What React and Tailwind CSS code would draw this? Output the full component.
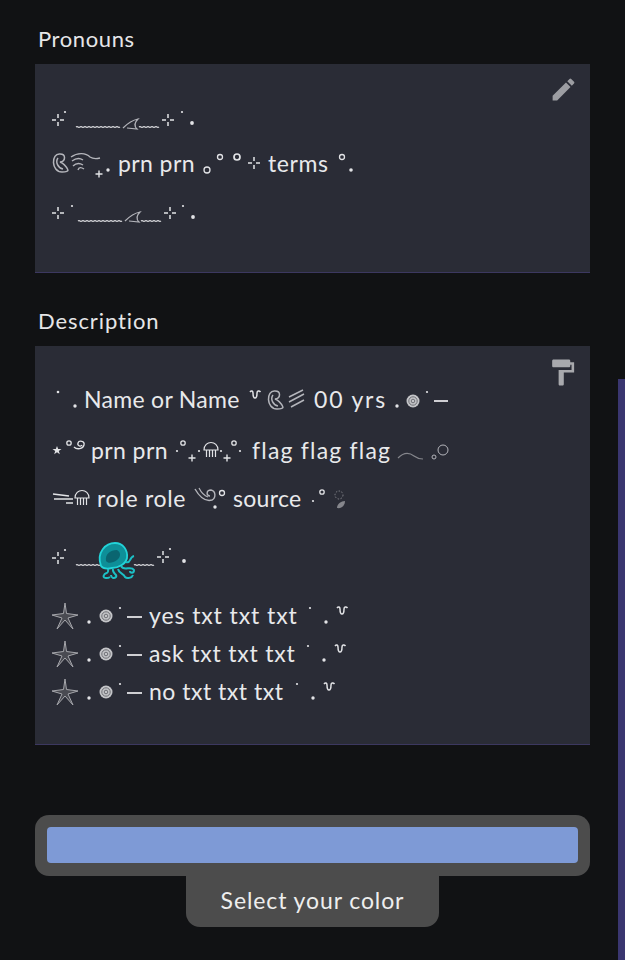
import React from 'react';

const INK = '#e2e3e6';
const SOFT = '#b4b5bb';

// ornaments are drawn in page coordinates, the viewBox shifts them into the row
const Orn = ({ x, w, cy, children }) => (
  <svg width={w} height={44} viewBox={`${x} ${cy - 22} ${w} 44`} className="shrink-0 overflow-visible" fill="none">
    {children}
  </svg>
);

const Dot = ({ x, y, r = 1.4, c = INK }) => <circle cx={x} cy={y} r={r} fill={c} />;
const Ring = ({ x, y, r = 2.5, c = INK, w = 1.3 }) => <circle cx={x} cy={y} r={r} stroke={c} strokeWidth={w} />;
const Plus = ({ x, y }) => (
  <path d={`M${x - 3.5} ${y}h7M${x} ${y - 3.5}v7`} stroke={INK} strokeWidth="1.4" />
);
const Spark = ({ x, y }) => (
  <path d={`M${x - 6} ${y}h4M${x + 2} ${y}h4M${x} ${y - 6}v4M${x} ${y + 2}v4`} stroke={INK} strokeWidth="1.5" />
);
const Wave = ({ x1, x2, y, c = INK }) => {
  let d = `M${x1} ${y}`;
  for (let x = x1; x < x2; x += 4) d += `q1 -.7 2 0t2 0`;
  return <path d={d} stroke={c} strokeWidth="1.3" />;
};
const Fin = ({ x, y }) => (
  <path d={`M${x} ${y + 4}C${x + 5} ${y - 1} ${x + 10} ${y - 4} ${x + 15} ${y - 5}C${x + 11} ${y - 1} ${x + 11} ${y + 2} ${x + 14} ${y + 5}L${x + 4} ${y + 4}`} stroke={SOFT} strokeWidth="1.2" />
);
const Shell = ({ x, y }) => (
  <g stroke={SOFT} strokeWidth="1.5">
    <path d={`M${x + 7} ${y - 9}C${x - 2} ${y - 10} ${x - 2} ${y + 9} ${x + 9} ${y + 9}C${x + 13} ${y + 9} ${x + 15} ${y + 8} ${x + 15} ${y + 7}`} />
    <path d={`M${x + 7} ${y - 9}C${x + 13} ${y - 9} ${x + 13} ${y - 2} ${x + 7} ${y - 1}C${x + 10} ${y} ${x + 13} ${y + 3} ${x + 15} ${y + 7}`} />
    <path d={`M${x + 5} ${y - 5}C${x + 2} ${y - 1} ${x + 5} ${y + 5} ${x + 10} ${y + 6}`} />
  </g>
);
const Spiral = ({ x, y }) => (
  <g>
    <circle cx={x} cy={y} r="6.5" fill="#c4c5c8" />
    <circle cx={x} cy={y} r="4.2" stroke="#6f7076" strokeWidth="1" />
    <circle cx={x} cy={y} r="1.8" stroke="#6f7076" strokeWidth="1" />
  </g>
);
const Squig = ({ x, y }) => (
  <path d={`M${x - 5} ${y - 3}c1.5 -2 3 -1 3 1c0 3 1 5 2 5s2 -2 2 -5c0 -2 2 -3 3.5 -1`} stroke={INK} strokeWidth="1.5" />
);
const StarFish = ({ x, y }) => (
  <path d={`M${x} ${y - 13}L${x + 1.5} ${y - 2.5}L${x + 13} ${y - 1}L${x + 3} ${y + 2}L${x + 8} ${y + 13}L${x} ${y + 4}L${x - 8} ${y + 13}L${x - 3} ${y + 2}L${x - 13} ${y - 1}L${x - 1.5} ${y - 2.5}Z`} fill="#4a4b52" stroke="#a5a6ab" strokeWidth="1" />
);
const Medusa = ({ x, y }) => (
  <g stroke={INK} strokeWidth="1.2">
    <path d={`M${x - 7} ${y + 1}C${x - 7} ${y - 9} ${x + 7} ${y - 9} ${x + 7} ${y + 1}Z`} />
    <path d={`M${x - 4.5} ${y + 1}v7M${x - 1.5} ${y + 1}v7M${x + 1.5} ${y + 1}v7M${x + 4.5} ${y + 1}v7`} />
  </g>
);

const Txt = ({ className, children }) => (
  <span className={`shrink-0 whitespace-nowrap pb-[1px] text-[23px] leading-[41px] text-[#e8e9eb] ${className}`}>{children}</span>
);

const Row = ({ className = '', children }) => (
  <div className={`flex items-center pl-[17px] ${className}`}>{children}</div>
);

const TopDivider = () => (
  <Orn x={52} w={150} cy={120}>
    <Spark x={58} y={120} /><Dot x={65} y={112} r={1.1} />
    <Wave x1={76} x2={120} y={127} /><Fin x={123} y={124} /><Wave x1={139} x2={159} y={127} />
    <Spark x={168} y={120} /><Dot x={182} y={112} r={1.1} /><Dot x={192} y={123} r={1.9} />
  </Orn>
);

const BottomDivider = () => (
  <Orn x={52} w={150} cy={214}>
    <Spark x={58} y={213} /><Dot x={72} y={206} r={1.1} />
    <Wave x1={78} x2={122} y={221} /><Fin x={125} y={217} /><Wave x1={141} x2={161} y={221} />
    <Spark x={170} y={213} /><Dot x={183} y={206} r={1.1} /><Dot x={193} y={217} r={1.9} />
  </Orn>
);

const Jellyfish = () => (
  <g>
    <path d="M101 566C96 552 106 543 115 543C123 543 128 550 127 558C126 564 118 568 112 568C107 569 103 569 101 566Z" fill="#0e8f98" stroke="#22d3d8" strokeWidth="1.8" />
    <path d="M106 561C105 554 110 550 117 550C121 552 121 557 117 560C113 563 108 564 106 561Z" fill="#0a6570" />
    <g stroke="#1cc0c6" strokeWidth="2">
      <path d="M126 562C131 564 129 557 134 556" />
      <path d="M121 566C124 572 131 565 134 570C134 574 130 573 130 571" />
      <path d="M118 569C119 574 124 573 125 577C127 579 132 578 133 575" />
      <path d="M113 569C112 574 118 574 116 577C114 579 111 578 111 575" />
      <path d="M108 569C109 575 105 572 104 575C102 578 107 579 110 577" />
    </g>
  </g>
);

const ListRow = ({ cy, label, labelW, tail }) => (
  <Row className="h-[38px]">
    <Orn x={52} w={97} cy={cy}>
      <StarFish x={65} y={cy} /><Dot x={89} y={cy + 6} r={1.7} /><Spiral x={106} y={cy} />
      <Dot x={120} y={cy - 8} r={1.1} /><path d={`M127 ${cy + 1}h15`} stroke={INK} strokeWidth="1.8" />
    </Orn>
    <Txt className={labelW}>{label}</Txt>
    <Orn x={tail} w={50} cy={cy}>
      <Dot x={tail + 13} y={cy - 8} r={1.1} /><Dot x={tail + 29} y={cy + 6} r={1.7} /><Squig x={tail + 45} y={cy - 5} />
    </Orn>
  </Row>
);

const App = () => {
  return (
    <div className="relative h-[960px] w-[625px] overflow-hidden bg-[#111214] font-['Lato',sans-serif]">
      <div className="pl-[35px] pr-[35px] pt-[23px]">
        <h2 className="pl-[3px] text-[22px] leading-[32px] tracking-[0.6px] text-[#e6e6e8]">Pronouns</h2>
        <div className="relative mt-[9px] h-[209px] border-b border-[#3c3860] bg-[#2a2c36] pt-[34px]">
          <svg className="absolute right-[12px] top-[11px] h-[29px] w-[29px]" viewBox="0 0 24 24" fill="#9c9da2">
            <path d="M3 17.25V21h3.75L17.81 9.94l-3.75-3.75L3 17.25zM20.71 7.04a1 1 0 0 0 0-1.41l-2.34-2.34a1 1 0 0 0-1.41 0l-1.83 1.83 3.75 3.75 1.83-1.83z" />
          </svg>
          <Row className="h-[44px]"><TopDivider /></Row>
          <Row className="h-[44px]">
            <Orn x={52} w={66} cy={164}>
              <Shell x={53} y={163} />
              <path d="M71 157C78 152 86 153 90 157C93 159 96 159 100 158M72 161C76 158 80 158 83 160M73 166C76 163 80 163 83 165M78 170C79 167 81 167 84 169" stroke={SOFT} strokeWidth="1.4" />
              <Plus x={99} y={174} /><Dot x={108} y={170} r={1.7} />
            </Orn>
            <Txt className="w-[79px] tracking-[0.4px]">prn prn</Txt>
            <Orn x={197} w={71} cy={164}>
              <Ring x={207} y={170} r={3} /><Ring x={220} y={157} r={2.5} /><Ring x={237} y={157} r={3} w={1.7} /><Spark x={254} y={163} />
            </Orn>
            <Txt className="w-[62px] tracking-[0.6px]">terms</Txt>
            <Orn x={330} w={30} cy={164}>
              <Ring x={342} y={157} r={2.5} /><Dot x={351} y={170} r={1.8} />
            </Orn>
          </Row>
          <Row className="mt-[6px] h-[44px]"><BottomDivider /></Row>
        </div>

        <h2 className="mt-[32px] pl-[3px] text-[22px] leading-[32px] tracking-[0.9px] text-[#e6e6e8]">Description</h2>
        <div className="relative mt-[9px] h-[399px] border-b border-[#3c3860] bg-[#2a2c36] pt-[32px]">
          <svg className="absolute right-[12px] top-[11px] h-[31px] w-[31px]" viewBox="0 0 24 24" fill="#a8a9ad">
            <path d="M18 4V3c0-.55-.45-1-1-1H5c-.55 0-1 .45-1 1v4c0 .55.45 1 1 1h12c.55 0 1-.45 1-1V6h1v4H9v11c0 .55.45 1 1 1h2c.55 0 1-.45 1-1v-9h8V4h-3z" />
          </svg>
          <Row className="h-[44px]">
            <Orn x={52} w={32} cy={400}>
              <Dot x={58} y={392} r={1.3} /><Dot x={75} y={406} r={1.7} />
            </Orn>
            <Txt className="w-[164px] tracking-[0.3px]">Name or Name</Txt>
            <Orn x={248} w={66} cy={400}>
              <Squig x={255} y={395} /><Shell x={268} y={400} />
              <path d="M289 397L303 390M289 402L304 394M291 407L304 400" stroke={SOFT} strokeWidth="1.5" />
            </Orn>
            <Txt className="w-[76px] tracking-[1.8px]">00 yrs</Txt>
            <Orn x={390} w={62} cy={400}>
              <Dot x={397} y={406} r={1.7} /><Spiral x={413} y={401} /><Dot x={427} y={392} r={1.1} />
              <path d="M434 401h14" stroke={INK} strokeWidth="1.8" />
            </Orn>
          </Row>
          <Row className="mt-[7px] h-[44px]">
            <Orn x={52} w={39} cy={451}>
              <path d="M57 446l1.2 3h3.3l-2.7 2 1 3.2-2.8-2-2.8 2 1-3.2-2.7-2h3.3z" fill={INK} />
              <Ring x={69} y={443} r={2.2} />
              <path d="M74 447c3 3 9 2 10-2s-5-5-6-2 3 4 4 2" stroke={INK} strokeWidth="1.3" />
            </Orn>
            <Txt className="w-[80px] tracking-[0.4px]">prn prn</Txt>
            <Orn x={171} w={81} cy={451}>
              <Dot x={177} y={451} r={1.1} /><Ring x={183} y={443} r={2.2} /><Plus x={192} y={458} /><Dot x={199} y={451} r={1.1} />
              <Medusa x={211} y={449} />
              <Dot x={221} y={451} r={1.1} /><Plus x={227} y={458} /><Ring x={234} y={443} r={2.2} /><Dot x={240} y={451} r={1.1} />
            </Orn>
            <Txt className="w-[146px] tracking-[1.2px]">flag flag flag</Txt>
            <Orn x={398} w={52} cy={451}>
              <path d="M398 458C404 452 410 453 414 456C418 459 420 459 423 459" stroke="#85868c" strokeWidth="1.2" />
              <Ring x={434} y={457} r={2} c={SOFT} w={1} /><Ring x={443} y={450} r={5} c={SOFT} w={1} />
            </Orn>
          </Row>
          <Row className="mt-[4px] h-[44px]">
            <Orn x={52} w={45} cy={499}>
              <path d="M53 494l16 2M54 499h19M66 503h7" stroke={INK} strokeWidth="1.6" />
              <Medusa x={82} y={497} />
            </Orn>
            <Txt className="w-[96px] tracking-[0.7px]">role role</Txt>
            <Orn x={193} w={40} cy={499}>
              <path d="M195 489C199 496 205 502 212 500C216 498 216 491 211 490C206 490 206 496 210 496" stroke={SOFT} strokeWidth="1.4" />
              <path d="M199 488C202 494 205 496 208 497" stroke={SOFT} strokeWidth="1.2" />
              <Dot x={215} y={507} r={1.7} /><Ring x={222} y={493} r={2.5} />
            </Orn>
            <Txt className="w-[75px] tracking-[0.3px]">source</Txt>
            <Orn x={308} w={45} cy={499}>
              <Dot x={313} y={501} r={1.1} /><Ring x={322} y={492} r={2.2} />
              <circle cx={339} cy={495} r={4} stroke="#85868c" strokeWidth="1" strokeDasharray="1.5 1.5" />
              <path d="M337 508C337 504 341 501 345 501C345 505 342 509 337 508Z" fill="#85868c" />
            </Orn>
          </Row>
          <div className="mt-[9px] flex h-[60px] items-center pl-[17px]">
            <svg width="140" height="60" viewBox="52 530 140 60" className="shrink-0" fill="none">
              <Spark x={58} y={558} /><Dot x={65} y={550} r={1.1} />
              <Wave x1={76} x2={98} y={565} /><Wave x1={134} x2={154} y={565} />
              <Jellyfish />
              <Spark x={163} y={557} /><Dot x={170} y={549} r={1.1} /><Dot x={184} y={561} r={1.9} />
            </svg>
          </div>
          <div className="mt-[7px]">
            <ListRow cy={616} label="yes txt txt txt" labelW="w-[148px] tracking-[0.9px]" tail={297} />
            <ListRow cy={654} label="ask txt txt txt" labelW="w-[146px] tracking-[0.8px]" tail={295} />
            <ListRow cy={692} label="no txt txt txt" labelW="w-[135px] tracking-[0.5px]" tail={284} />
          </div>
        </div>

        <div className="mt-[70px] h-[61px] rounded-[14px] bg-[#4c4c4c] px-[12px] pt-[12px]">
          <div className="h-[36px] w-full rounded-[4px] bg-[#7e9ad6]" />
        </div>
        <div className="ml-[151px] flex h-[51px] w-[253px] items-center justify-center rounded-b-[14px] bg-[#4c4c4c] pb-[3px] text-[23px] tracking-[0.9px] text-[#eeeeee]">
          Select your color
        </div>
      </div>
      <div className="absolute right-0 top-[379px] h-[581px] w-[7px] bg-[#3a3670]" />
    </div>
  );
};

export default App;
